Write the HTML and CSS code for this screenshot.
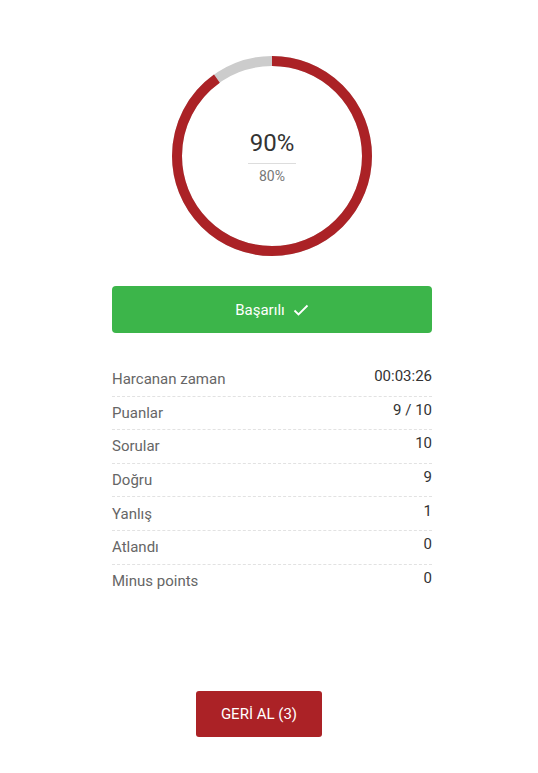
FILE: index.html
```html
<!DOCTYPE html>
<html lang="tr">
<head>
<meta charset="utf-8">
<title>Sonuç</title>
<link rel="stylesheet" href="styles.css">
</head>
<body>
<main class="wrap">
  <div class="gauge">
    <svg class="ring" width="200" height="200" viewBox="0 0 200 200">
      <circle cx="100" cy="100" r="95" fill="none" stroke="#cccccc" stroke-width="10"/>
      <circle cx="100" cy="100" r="95" fill="none" stroke="#ab2226" stroke-width="10"
        stroke-dasharray="537.21 596.9" transform="rotate(-90 100 100)"/>
    </svg>
    <div class="gauge-text">
      <div class="score">90%</div>
      <div class="pass">80%</div>
    </div>
  </div>

  <div class="status">Başarılı
    <svg class="check" width="16" height="14" viewBox="0 0 16 14"><path d="M1.5 7.5 L5.5 11.5 L14.5 2.5" fill="none" stroke="#fff" stroke-width="1.8"/></svg>
  </div>

  <ul class="stats">
    <li class="row"><span class="label">Harcanan zaman</span><span class="value">00:03:26</span></li>
    <li class="row"><span class="label">Puanlar</span><span class="value">9 / 10</span></li>
    <li class="row"><span class="label">Sorular</span><span class="value">10</span></li>
    <li class="row"><span class="label">Doğru</span><span class="value">9</span></li>
    <li class="row"><span class="label">Yanlış</span><span class="value">1</span></li>
    <li class="row"><span class="label">Atlandı</span><span class="value">0</span></li>
    <li class="row"><span class="label">Minus points</span><span class="value">0</span></li>
  </ul>

  <div class="actions">
    <button class="undo" type="button">GERİ AL (3)</button>
  </div>
</main>
</body>
</html>
```

FILE: styles.css
```css
* { box-sizing: border-box; }
html, body { margin: 0; padding: 0; background: #fff; }
body { font-family: Roboto, "Noto Sans", "Liberation Sans", sans-serif; color: #333; }

.wrap {
  width: 320px;
  margin-left: 112px;
  padding-top: 56px;
}

.gauge {
  display: grid;
  justify-items: center;
  align-items: center;
}
.gauge > * { grid-area: 1 / 1; }
.ring { display: block; }

.gauge-text {
  display: flex;
  flex-direction: column;
  align-items: center;
}
.score {
  width: 48px;
  font-size: 24px;
  line-height: 28px;
  color: #333;
  padding-bottom: 6px;
  border-bottom: 1px solid #dddddd;
  white-space: nowrap;
  display: flex;
  justify-content: center;
}
.pass {
  margin-top: 4px;
  font-size: 14px;
  line-height: 16px;
  color: #777;
}

.status {
  margin-top: 30px;
  height: 47px;
  background: #3cb54a;
  border-radius: 4px;
  color: #fff;
  font-size: 15px;
  display: flex;
  align-items: center;
  justify-content: center;
  gap: 8px;
}
.check { display: block; }

.stats {
  list-style: none;
  margin: 30px 0 0;
  padding: 0;
}
.row {
  height: 33.6px;
  display: flex;
  justify-content: space-between;
  align-items: center;
  border-bottom: 1px dashed #e2e2e2;
}
.row:last-child { border-bottom: none; }
.label {
  font-size: 15px;
  color: #666;
}
.value {
  font-size: 15px;
  color: #333;
  margin-bottom: 6px;
}

.actions {
  display: flex;
  margin-top: 93px;
  padding-left: 84px;
}
.undo {
  width: 126px;
  height: 46px;
  border: none;
  border-radius: 3px;
  background: #ab2226;
  color: #fff;
  font-family: inherit;
  font-size: 15px;
}
```
